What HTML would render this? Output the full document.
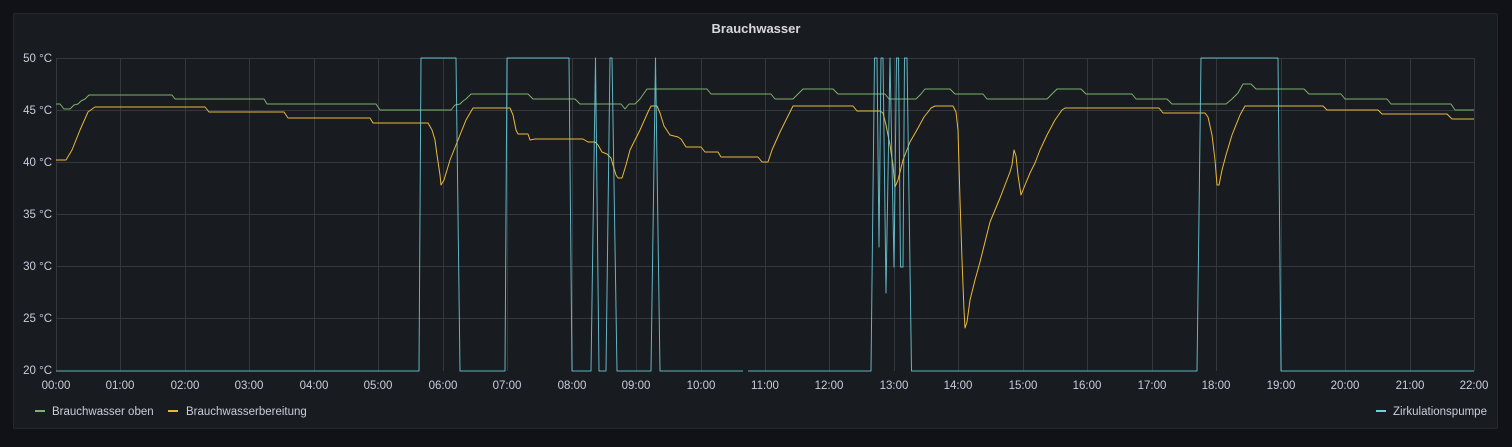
<!DOCTYPE html>
<html><head><meta charset="utf-8"><style>
html,body{margin:0;padding:0;background:#111217;width:1512px;height:447px;overflow:hidden;font-family:"Liberation Sans",sans-serif}
.panel{position:absolute;left:13px;top:13px;width:1485px;height:416px;background:#181b1f;border:1px solid #24272c;border-radius:2px;box-sizing:border-box}
svg{position:absolute;left:0;top:0}
text{font-family:"Liberation Sans",sans-serif;fill:#ccccdc;font-size:11.5px}
</style></head><body>
<div class="panel"></div>
<svg width="1512" height="447">
<text x="756" y="33" text-anchor="middle" style="font-size:13px;font-weight:bold;fill:#d8d9e0">Brauchwasser</text>
<g stroke="#34373c" stroke-width="1">
<line x1="56" y1="58.5" x2="1474" y2="58.5"/><line x1="56" y1="110.5" x2="1474" y2="110.5"/><line x1="56" y1="162.5" x2="1474" y2="162.5"/><line x1="56" y1="214.5" x2="1474" y2="214.5"/><line x1="56" y1="266.5" x2="1474" y2="266.5"/><line x1="56" y1="318.5" x2="1474" y2="318.5"/>
</g>
<g stroke="#34373c" stroke-width="1" id="vg"></g>
<g text-anchor="end">
<text x="52" y="62">50 °C</text><text x="52" y="114">45 °C</text><text x="52" y="166">40 °C</text><text x="52" y="218">35 °C</text><text x="52" y="270">30 °C</text><text x="52" y="322">25 °C</text><text x="52" y="374">20 °C</text>
</g>
<g text-anchor="middle" id="xl"></g>
<g fill="none" stroke-width="1" stroke-linejoin="round">
<polyline stroke="#7eb26d" points="56,104 60,104 64,109 70,109 74,105 78,104 81,101 85,99 89,95 172,95 175,99 264,99 267,104 376,104 380,110 451,110 455,105 460,104 463,101 466,99 471,94 528,94 533,99 575,99 580,104 621,104 625,109 629,104 635,104 640,99 647,89 707,89 711,94 771,94 775,99 793,99 798,94 803,89 833,89 838,94 885,94 889,99 916,99 921,94 925,89 950,89 955,94 983,94 987,99 1047,99 1052,94 1057,89 1081,89 1086,94 1132,94 1136,99 1167,99 1172,104 1226,104 1232,99 1238,93 1243,84 1251,84 1256,89 1304,89 1309,94 1341,94 1345,99 1387,99 1391,104 1451,104 1455,110 1474,110"/>
<polyline stroke="#eab839" points="56,160 66,160 72,150 80,130 88,112 95,107 205,107 209,112 284,112 288,118 370,118 373,123 428,123 432,130 435,140 437,155 440,175 441,185 444,180 450,160 458,140 466,120 473,108 510,108 513,115 516,130 518,134 528,134 530,140 535,139 583,139 588,142 595,142 598,145 602,152 607,154 611,158 613,165 616,175 618,178 622,178 626,165 630,150 640,130 648,112 651,106 657,106 660,113 664,126 670,135 678,137 681,139 686,147 701,147 705,152 718,152 721,157 758,157 762,162 768,162 772,150 780,132 788,116 793,106 853,106 857,111 880,111 883,113 886,125 890,145 893,165 895,187 898,180 903,160 910,142 918,128 924,117 928,112 931,108 935,106 953,106 956,112 958,130 960,200 962,260 964,310 965,328 967,322 970,300 975,280 980,262 985,242 990,222 995,210 1000,198 1005,185 1010,172 1012,165 1014,150 1016,156 1018,175 1021,195 1025,185 1030,173 1035,163 1040,150 1047,135 1055,120 1062,110 1065,108 1159,108 1163,113 1205,113 1208,117 1212,135 1215,160 1217,185 1219,185 1222,170 1226,155 1232,135 1240,115 1245,106 1323,106 1327,110 1378,110 1382,114 1447,114 1452,119 1474,119"/>
<polyline stroke="#6ed0e0" stroke-opacity="0.85" points="56,371 419,371 421,58 456,58 460,371 505,371 507,58 569,58 572,371 591,371 595.5,58 599,371 606,371 610,58 612,58 617,371 651,371 655.5,58 660,371 743,371"/>
<polyline stroke="#6ed0e0" stroke-opacity="0.85" points="748,371 871,371 874.5,58 877,58 879,247 881,58 883,58 886,293 890,58 894,267 896.5,58 898.5,58 900.5,267 903,267 904.5,58 907,58 911.5,371 1197,371 1201,58 1278,58 1281,371 1474,371"/>
</g>
<g stroke-width="2">
<line x1="35" y1="411" x2="45" y2="411" stroke="#7eb26d"/>
<line x1="168" y1="411" x2="178" y2="411" stroke="#eab839"/>
<line x1="1376" y1="411" x2="1386" y2="411" stroke="#6ed0e0"/>
</g>
<text x="52" y="415">Brauchwasser oben</text>
<text x="186" y="415">Brauchwasserbereitung</text>
<text x="1393" y="415">Zirkulationspumpe</text>
</svg>
<script>
var vg=document.getElementById('vg'),xl=document.getElementById('xl'),ns='http://www.w3.org/2000/svg';
for(var h=0;h<=22;h++){var x=Math.round(56+h*(1474-56)/22)+0.5;
var l=document.createElementNS(ns,'line');l.setAttribute('x1',x);l.setAttribute('x2',x);l.setAttribute('y1',58);l.setAttribute('y2',371);vg.appendChild(l);
var t=document.createElementNS(ns,'text');t.setAttribute('x',x-0.5);t.setAttribute('y',389);t.textContent=(h<10?'0':'')+h+':00';xl.appendChild(t);}
</script>
</body></html>
